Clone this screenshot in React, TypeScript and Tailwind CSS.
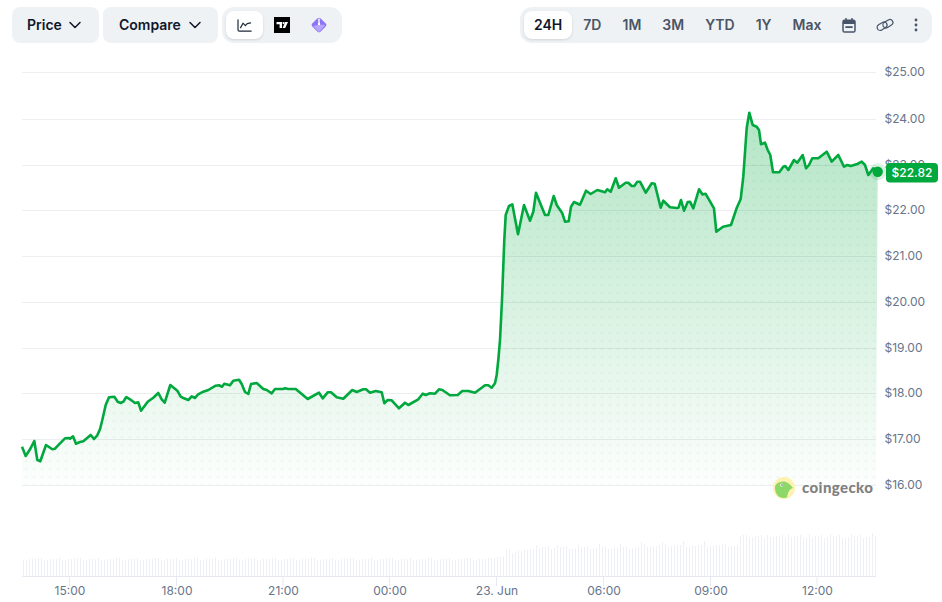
import { ChevronDown } from "lucide-react";

const ranges = [
  { label: "24H", active: true },
  { label: "7D" },
  { label: "1M" },
  { label: "3M" },
  { label: "YTD" },
  { label: "1Y" },
  { label: "Max" },
];

const priceLabels = ["$25.00", "$24.00", "$23.00", "$22.00", "$21.00", "$20.00", "$19.00", "$18.00", "$17.00", "$16.00"];
const gridYs = [72, 119, 165, 210, 256, 302, 348, 393, 439, 485];

const timeLabels = [
  { x: 70, label: "15:00" },
  { x: 177, label: "18:00" },
  { x: 283.5, label: "21:00" },
  { x: 390, label: "00:00" },
  { x: 497, label: "23. Jun" },
  { x: 604, label: "06:00" },
  { x: 711, label: "09:00" },
  { x: 817.5, label: "12:00" },
];

// traced off the reference, roughly every few px
const line: [number, number][] = [
  [22, 446.7], [25.7, 456], [30, 449.3], [34.3, 441], [37.3, 460], [40.3, 461.3], [46, 445], [52.3, 449.3],
  [55, 448.7], [60, 443.3], [65, 438.3], [69, 438], [70, 438.7], [73, 436.3], [76, 443.7], [80, 442],
  [83.3, 441.3], [90.7, 435], [94, 439], [97.3, 435.3], [100, 429.3], [102.3, 420], [105.7, 405], [109, 397.3],
  [114.3, 396.7], [117.7, 401.7], [120.7, 403], [123.3, 401.7], [126.3, 397], [130, 399.3], [135, 403], [138.3, 402.3],
  [141, 410.7], [147.7, 401.7], [153.3, 397.7], [158.3, 393], [161.7, 399.3], [164.7, 402.7], [170.3, 385], [174.3, 388.3],
  [177.3, 390.7], [180.7, 396.7], [183.3, 398], [188.3, 400], [191.7, 396.3], [195, 398], [197.7, 394.7], [203.3, 391.7],
  [208.3, 390], [215.7, 385.7], [219, 385.3], [222, 386.7], [224.3, 383.7], [230, 385.3], [233.3, 380.7], [239, 379.7],
  [241.7, 384], [245, 392], [248.3, 394], [251, 384], [256.7, 383], [263.3, 389], [266.7, 390], [271.7, 393.3],
  [275, 389], [278.3, 389], [283, 389], [285, 388.3], [288.3, 389], [295.7, 389], [307.7, 399], [319, 392.7],
  [322.7, 398.3], [327.7, 392.3], [331, 392.3], [336.7, 397.3], [343.3, 398.7], [352.3, 390], [356.7, 392], [363.3, 389.3],
  [366, 389.3], [370, 392.7], [375.7, 391], [381.7, 392.3], [384.3, 403.3], [387.7, 400], [391.7, 400.3], [399, 408.3],
  [405, 402.7], [408.3, 405], [418.3, 399.3], [422.7, 393.7], [425.7, 395], [430, 393.3], [435, 393.7], [439, 389.3],
  [442.3, 390], [450, 395.3], [457.7, 395], [462.3, 391], [468.3, 391], [475, 392.7], [485, 385.3], [488.3, 385.3],
  [491.7, 387.7], [495, 383.3], [496.7, 375], [498.3, 360], [500, 340], [502, 300], [504.3, 240], [505.7, 215],
  [509, 206], [512.3, 204.3], [518, 234.3], [524, 205], [530, 220.7], [533.3, 211.7], [536, 192.7], [545, 215],
  [548.3, 215], [553.7, 196], [556.7, 205], [562.3, 213.3], [565, 221.7], [568.7, 221.3], [571, 206.7], [574, 202],
  [580, 204.7], [586, 190.7], [590.7, 194], [597.3, 190], [600, 190.7], [605, 192.3], [607.3, 189.3], [610.7, 191.7],
  [615.7, 178.3], [619, 187.7], [625.7, 182.7], [628.3, 182.7], [631.7, 186], [634.3, 186], [637.3, 181.7], [640, 181.7],
  [645.7, 192.7], [651.7, 183.3], [654.7, 183.7], [660.7, 207.7], [663.3, 200.7], [670, 207.3], [676.7, 208], [678.5, 207.7],
  [681, 200], [684, 210.7], [687.7, 202], [690, 201.7], [693.3, 208.3], [699, 189.3], [702.5, 194.5], [705.5, 193.7],
  [714, 208.3], [716.3, 231.7], [723, 226.7], [731, 225], [736.7, 208], [740.7, 199], [743.3, 176.7], [746.7, 128],
  [749.3, 112.7], [752.7, 125], [756.7, 126.7], [759, 130], [761, 144.3], [765, 142.7], [767.7, 150], [770.3, 155],
  [773, 172.3], [779.3, 172.3], [783.3, 166.7], [785.3, 166], [788.3, 170], [794, 160], [797.3, 162.7], [802.7, 155],
  [806, 168.3], [809, 165], [812.3, 158.3], [818.3, 158.3], [826.7, 151.7], [831.7, 161.7], [838.3, 155], [844, 166.7],
  [847.3, 165], [850.7, 166], [857.3, 164], [861.7, 161.7], [865, 165], [868.3, 175], [873.3, 168.3], [877.7, 171.7],
];

const linePath = line.map(([x, y], i) => `${i ? "L" : "M"}${x} ${y}`).join(" ");
const areaPath = `${linePath} L876 485 L22 485 Z`;

// volume heights: flat until the jump, then steps up with a few spikes
function volumeHeight(x: number, i: number) {
  const jitter = ((i * 7919) % 13) / 13;
  const spike = i % 7 === 3 ? 3 : 0;
  if (x < 490) return 16 + jitter * 2;
  if (x < 505) return 18 + jitter * 3;
  if (x < 530) return 23 + jitter * 4;
  if (x < 640) return 27 + jitter * 3 + spike;
  if (x < 740) return 29 + jitter * 3 + spike;
  return 38 + jitter * 3 + spike;
}

const bars = Array.from({ length: 285 }, (_, i) => {
  const x = Math.round(23 + i * 3);
  return { x, h: Math.round(volumeHeight(x, i)) };
});

function LineIcon() {
  return (
    <svg width="15" height="13" viewBox="0 0 15 13" fill="none" stroke="#1e293b" strokeWidth="1.2" strokeLinecap="round" strokeLinejoin="round">
      <path d="M1 .8V10.8C1 11.6 1.5 12.1 2.3 12.1H14.2" />
      <path d="M3.6 8.6L6 4.2L8.4 6.6L10.2 4.6L13.6 3.8" />
    </svg>
  );
}

function TradingViewIcon() {
  return (
    <svg width="16" height="16" viewBox="0 0 16 16">
      <rect width="16" height="16" fill="#000" />
      <path d="M2.5 5H8V11H5.6V7.2H2.5Z" fill="#fff" />
      <circle cx="9.6" cy="6.1" r="1.1" fill="#fff" />
      <path d="M11.2 5H14L11.2 11H8.6Z" fill="#fff" />
    </svg>
  );
}

function GemIcon() {
  return (
    <svg width="16" height="16" viewBox="0 0 16 16">
      <rect x="2.2" y="2.2" width="11.6" height="11.6" rx="2.4" transform="rotate(45 8 8)" fill="#8b74f6" />
      <path d="M8 7.5L14.4 8 8.6 14.6C8.2 15 7.8 15 7.4 14.6L2.2 9.2Z" fill="#b7a6fb" />
      <rect x="7.2" y="1.5" width="1.6" height="5" fill="#f1edff" />
      <circle cx="8" cy="7" r="1.2" fill="#fff" />
    </svg>
  );
}

function CalendarIcon() {
  return (
    <svg width="14" height="15" viewBox="0 0 14 15" fill="none">
      <rect x="1" y="2.2" width="12" height="11.8" rx="1.6" stroke="#475569" strokeWidth="1.5" />
      <path d="M1 3.6C1 2.8 1.6 2.2 2.4 2.2H11.6C12.4 2.2 13 2.8 13 3.6V6H1Z" fill="#475569" />
      <path d="M4 .6V3M10 .6V3" stroke="#475569" strokeWidth="1.5" strokeLinecap="round" />
      <rect x="3.4" y="8.2" width="7.2" height="1.8" fill="#475569" />
    </svg>
  );
}

function LinkIcon() {
  return (
    <svg width="18" height="14" viewBox="0 0 18 14" fill="none" stroke="#475569" strokeWidth="1.2">
      <rect x="0.8" y="5.2" width="10.6" height="6" rx="3" transform="rotate(-32 6 8.2)" />
      <rect x="6.6" y="2.6" width="10.6" height="6" rx="3" transform="rotate(-32 12 5.6)" />
    </svg>
  );
}

function DotsIcon() {
  return (
    <svg width="4" height="14" viewBox="0 0 4 14" fill="#475569">
      <circle cx="2" cy="2" r="1.4" />
      <circle cx="2" cy="7" r="1.4" />
      <circle cx="2" cy="12" r="1.4" />
    </svg>
  );
}

function Chart() {
  return (
    <svg width="942" height="559" viewBox="0 43 942 559" className="block" style={{ fontFamily: "Inter, sans-serif" }}>
      <defs>
        <linearGradient id="areaFill" x1="0" y1="113" x2="0" y2="485" gradientUnits="userSpaceOnUse">
          <stop offset="0" stopColor="#00a83e" stopOpacity="0.3" />
          <stop offset="1" stopColor="#00a83e" stopOpacity="0.01" />
        </linearGradient>
        <pattern id="areaDots" x="2" y="5" width="8" height="8" patternUnits="userSpaceOnUse">
          <circle cx="0" cy="0" r="1.3" fill="#00a83e" fillOpacity="0.05" />
          <circle cx="8" cy="0" r="1.3" fill="#00a83e" fillOpacity="0.05" />
          <circle cx="0" cy="8" r="1.3" fill="#00a83e" fillOpacity="0.05" />
          <circle cx="8" cy="8" r="1.3" fill="#00a83e" fillOpacity="0.05" />
        </pattern>
      </defs>

      <path d={areaPath} fill="url(#areaFill)" />
      <path d={areaPath} fill="url(#areaDots)" />

      {gridYs.map((y) => (
        <line key={y} x1="22" x2="876" y1={y + 0.5} y2={y + 0.5} stroke="#1e293b" strokeOpacity="0.08" />
      ))}

      {bars.map((b) => (
        <rect key={b.x} x={b.x} y={576 - b.h} width="1" height={b.h} fill="#eef0f5" shapeRendering="crispEdges" />
      ))}
      <line x1="22" x2="876" y1="576.5" y2="576.5" stroke="#e6e9f0" />

      {timeLabels.map((t) => (
        <g key={t.label}>
          <line x1={t.x - 0.5} x2={t.x - 0.5} y1="577" y2="586" stroke="#e6e9f0" />
          <text x={t.x} y="595" textAnchor="middle" fontSize="12" fill="#677489">
            {t.label}
          </text>
        </g>
      ))}

      {priceLabels.map((p, i) => (
        <text key={p} x="884.5" y={gridYs[i] + 4} fontSize="12" fill="#677489">
          {p}
        </text>
      ))}

      <path d={linePath} fill="none" stroke="#00a83e" strokeWidth="2.6" strokeLinejoin="round" />

      <circle cx="877.7" cy="171.7" r="8.5" fill="#00a83e" fillOpacity="0.15" />
      <circle cx="877.7" cy="171.7" r="5.2" fill="#00a83e" />
      <rect x="886" y="163" width="52" height="19.5" rx="4" fill="#00a83e" />
      <text x="912" y="177.2" textAnchor="middle" fontSize="12" fontWeight="500" fill="#fff">
        $22.82
      </text>

      <circle cx="784" cy="488" r="11" fill="#fdf2b0" />
      <path d="M775 488C775 484 778 482 783 481.5C787 481.5 790 484 793 488C790 489 788 491 787 497.5C784 498.5 780 498 778 496C776 493 775 491 775 488Z" fill="#8dd868" />
      <circle cx="781.7" cy="485" r="1.5" fill="#fff" />
      <circle cx="782" cy="485" r="0.8" fill="#555" />
      <text x="802" y="492.5" fontSize="15" fontWeight="900" fill="#808080" style={{ fontFamily: "Lato, sans-serif" }} letterSpacing="0.4">
        coingecko
      </text>
    </svg>
  );
}

export default function App() {
  return (
    <div className="w-[942px] h-[602px] overflow-hidden bg-white font-['Inter',sans-serif]">
      <div className="flex h-[43px] items-end justify-between pl-3 pr-2.5">
        <div className="flex gap-1">
          <button className="flex h-9 w-[87px] items-center gap-[3px] rounded-lg bg-[#eff2f5] pl-[15px] text-sm font-semibold text-[#0f172a]">
            Price
            <ChevronDown className="h-5 w-5" strokeWidth={1.8} />
          </button>
          <button className="flex h-9 w-[115px] items-center gap-1 rounded-lg bg-[#eff2f5] pl-4 text-sm font-semibold text-[#0f172a]">
            Compare
            <ChevronDown className="h-5 w-5" strokeWidth={1.8} />
          </button>
          <div className="flex h-9 w-[120px] items-center rounded-xl bg-[#eff2f5] px-1">
            <div className="flex h-7 w-[38px] items-center justify-center rounded-lg bg-white shadow-sm">
              <LineIcon />
            </div>
            <div className="flex w-[38px] justify-center">
              <TradingViewIcon />
            </div>
            <div className="flex w-[38px] justify-center">
              <GemIcon />
            </div>
          </div>
        </div>

        <div className="flex h-9 w-[412px] items-center gap-px rounded-xl bg-[#eff2f5] px-1">
          {ranges.map((r) => (
            <div
              key={r.label}
              className={
                r.active
                  ? "flex h-7 items-center rounded-lg bg-white px-2.5 text-sm font-semibold text-[#0f172a] shadow-sm"
                  : "flex h-7 items-center px-2.5 text-sm font-semibold text-[#4b5563]"
              }
            >
              {r.label}
            </div>
          ))}
          <div className="flex h-7 w-[33px] items-center justify-center">
            <CalendarIcon />
          </div>
          <div className="flex h-7 w-[37px] items-center justify-center">
            <LinkIcon />
          </div>
          <div className="flex h-7 w-[23px] items-center justify-center">
            <DotsIcon />
          </div>
        </div>
      </div>
      <Chart />
    </div>
  );
}
